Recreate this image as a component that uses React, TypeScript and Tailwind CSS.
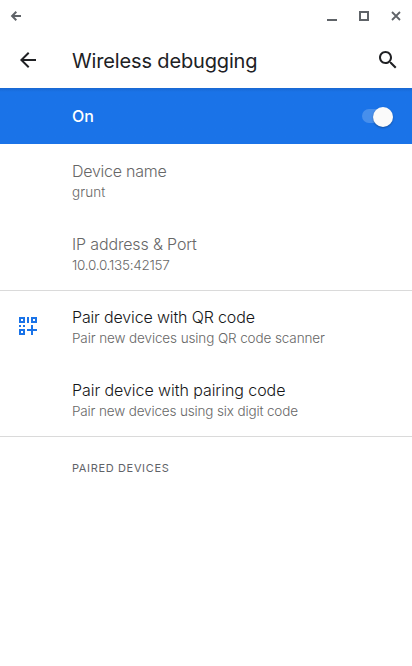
import type { ReactNode } from "react";

function WindowBar() {
  return (
    <div className="flex h-8 items-center px-[10px] text-[#5f6368]">
      <svg className="h-3 w-3" viewBox="0 0 12 12" fill="none" stroke="currentColor" strokeWidth="2">
        <path d="M11 6H2.5M6.3 1.8L2.1 6l4.2 4.2" />
      </svg>
      <div className="ml-auto flex gap-5">
        <svg className="h-3 w-3" viewBox="0 0 12 12" fill="currentColor">
          <path d="M1 9h10v2H1z" />
        </svg>
        <svg className="h-3 w-3" viewBox="0 0 12 12" fill="none" stroke="currentColor" strokeWidth="2">
          <path d="M2 2h8v8H2z" />
        </svg>
        <svg className="h-3 w-3" viewBox="0 0 12 12" fill="none" stroke="currentColor" strokeWidth="1.8">
          <path d="M2 2l8 8M10 2l-8 8" />
        </svg>
      </div>
    </div>
  );
}

function Header() {
  return (
    <header className="flex h-14 items-center pl-4 pr-3 text-[#202124]">
      <svg className="h-6 w-6" viewBox="0 0 24 24" fill="currentColor">
        <path d="M20 11H7.83l5.59-5.59L12 4l-8 8 8 8 1.41-1.41L7.83 13H20v-2z" />
      </svg>
      <h1 className="ml-8 mt-0.5 whitespace-nowrap text-[20px] font-normal leading-6 tracking-[-0.15px]">Wireless debugging</h1>
      <svg className="ml-auto h-6 w-6" viewBox="0 0 24 24" fill="currentColor">
        <path d="M15.5 14h-.79l-.28-.27C15.41 12.59 16 11.11 16 9.5 16 5.91 13.09 3 9.5 3S3 5.91 3 9.5 5.91 16 9.5 16c1.61 0 3.09-.59 4.23-1.57l.27.28v.79l5 4.99L20.49 19l-4.99-5zm-6 0C7.01 14 5 11.99 5 9.5S7.01 5 9.5 5 14 7.01 14 9.5 11.99 14 9.5 14z" />
      </svg>
    </header>
  );
}

function Toggle() {
  return (
    <div className="ml-auto flex h-[14px] w-[31px] items-center justify-end rounded-full bg-white/20">
      <div className="mt-px h-5 w-5 shrink-0 rounded-full bg-[#fafafa] shadow-[0_1px_2px_rgba(0,0,0,0.3)]" />
    </div>
  );
}

function QrIcon() {
  return (
    <svg className="h-[18px] w-[18px]" viewBox="0 0 18 18" fill="#1a73e8" fillRule="evenodd">
      <path d="M0 0h6v6H0zM2 2v2h2V2zM8 0h2v6H8zM12 0h6v6h-6zM14 2v2h2V2zM0 8h2v2H0zM4 8h2v2H4zM0 12h6v6H0zM2 14v2h2v-2zM12 8h2v4h4v2h-4v4h-2v-4H8v-2h4z" />
    </svg>
  );
}

type RowProps = { title: string; detail: string; titleClass: string; detailClass: string; icon?: ReactNode };

function Row({ title, detail, titleClass, detailClass, icon }: RowProps) {
  return (
    <div className="flex h-[73px] whitespace-nowrap">
      <div className="w-[72px] shrink-0 pl-[19px] pt-[27px]">{icon}</div>
      <div className="pt-4">
        <div className={`text-[16px] font-light leading-[22px] ${titleClass}`}>{title}</div>
        <div className={`text-[13.5px] font-light leading-5 text-[#676767] ${detailClass}`}>{detail}</div>
      </div>
    </div>
  );
}

export default function App() {
  return (
    <main className="h-[666px] w-[412px] overflow-hidden bg-white font-['Inter',sans-serif]">
      <WindowBar />
      <Header />
      <div className="flex h-14 items-center bg-linear-to-b from-[#1968d2] to-[#1a73e8] to-[4px] pl-[72px] pr-[19.5px] text-white">
        <span className="text-[16px] font-medium">On</span>
        <Toggle />
      </div>
      <section className="h-[147px] border-b border-[#dadada]">
        <Row title="Device name" detail="grunt" titleClass="text-[#676767] tracking-[-0.25px]" detailClass="tracking-[0.1px]" />
        <Row title="IP address & Port" detail="10.0.0.135:42157" titleClass="text-[#676767] tracking-[-0.15px]" detailClass="tracking-[-0.27px]" />
      </section>
      <section className="flow-root h-[146px] border-b border-[#dadada]">
        <div className="-mt-px">
          <Row title="Pair device with QR code" detail="Pair new devices using QR code scanner" titleClass="text-[#151618] tracking-[-0.15px]" detailClass="tracking-[-0.11px]" icon={<QrIcon />} />
          <Row title="Pair device with pairing code" detail="Pair new devices using six digit code" titleClass="text-[#151618] tracking-[-0.06px]" detailClass="tracking-[-0.15px]" />
        </div>
      </section>
      <h2 className="pl-[72px] pt-[23px] text-[11px] leading-4 tracking-[0.65px] text-[#5f6368]">PAIRED DEVICES</h2>
    </main>
  );
}
